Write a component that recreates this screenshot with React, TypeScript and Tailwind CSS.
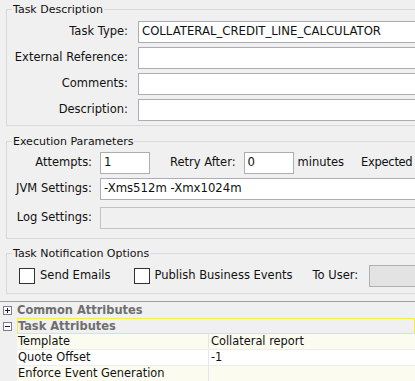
import React from "react";

const font = { fontFamily: '"DejaVu Sans", Verdana, sans-serif' };
const boldFont = { fontFamily: '"DejaVu Sans Condensed", "DejaVu Sans", sans-serif', fontStretch: "condensed" as const };

function Field({ value = "", disabled = false, className = "" }: { value?: string; disabled?: boolean; className?: string }) {
  return (
    <div
      className={`h-[22px] shrink-0 border flex items-center pl-[3px] text-[11.7px] text-[#111] whitespace-nowrap overflow-hidden ${
        disabled ? "bg-[#f0f0f0] border-[#c2c2c2]" : "bg-white border-[#abadb3]"
      } ${className}`}>
      {value}
    </div>
  );
}

function Group({ title, className = "", children }: { title: string; className?: string; children: React.ReactNode }) {
  return (
    <fieldset className={`ml-[6px] w-[500px] border border-[#d8d8d8] ${className}`}>
      <legend className="ml-[5px] px-px text-[11px] leading-[13px] text-[#111]">{title}</legend>
      {children}
    </fieldset>
  );
}

function Check({ label }: { label: string }) {
  return (
    <div className="flex items-center gap-[5px]">
      <div className="w-[16px] h-[16px] border border-[#333] bg-white" />
      <span>{label}</span>
    </div>
  );
}

const descRows = [
  { label: "Task Type:", value: "COLLATERAL_CREDIT_LINE_CALCULATOR" },
  { label: "External Reference:", value: "" },
  { label: "Comments:", value: "" },
  { label: "Description:", value: "" },
];

const attrRows = [
  { name: "Template", value: "Collateral report", bg: "bg-[#fbfbf0]" },
  { name: "Quote Offset", value: "-1", bg: "bg-white" },
  { name: "Enforce Event Generation", value: "", bg: "bg-[#fbfbf0]" },
];

function TreeBox({ open }: { open: boolean }) {
  return (
    <svg width="9" height="9" viewBox="0 0 9 9" className="shrink-0">
      <rect x="0.5" y="0.5" width="8" height="8" fill="#fff" stroke="#7d7d96" />
      <line x1="2" y1="4.5" x2="7" y2="4.5" stroke="#222" />
      {!open && <line x1="4.5" y1="2" x2="4.5" y2="7" stroke="#222" />}
    </svg>
  );
}

export default function App() {
  return (
    <div className="w-[415px] h-[381px] overflow-hidden bg-[#f0f0f0] text-[11.5px] text-[#111]" style={font}>
      <div className="pt-[3px]">
        <Group title="Task Description" className="pb-[4px]">
          <div className="flex flex-col gap-[4px] pt-[5px]">
            {descRows.map((r) => (
              <div key={r.label} className="flex items-center">
                <div className="w-[131px] text-right pr-[10px] whitespace-nowrap">{r.label}</div>
                <Field value={r.value} className="flex-1" />
              </div>
            ))}
          </div>
        </Group>

        <Group title="Execution Parameters" className="mt-[9px] pb-[9px]">
          <div className="flex flex-col pt-[4px]">
            <div className="flex items-center whitespace-nowrap">
              <div className="w-[93px] text-right pr-[8px]">Attempts:</div>
              <Field value="1" className="w-[50px]" />
              <span className="ml-[20px]">Retry After:</span>
              <Field value="0" className="w-[50px] ml-[8px]" />
              <span className="ml-[4px]">minutes</span>
              <span className="ml-[17px] tracking-[-0.3px]">Expected</span>
            </div>
            <div className="flex items-center mt-[4px]">
              <div className="w-[93px] text-right pr-[8px] whitespace-nowrap">JVM Settings:</div>
              <Field value="-Xms512m -Xmx1024m" className="flex-1" />
            </div>
            <div className="flex items-center mt-[7px]">
              <div className="w-[93px] text-right pr-[8px] whitespace-nowrap">Log Settings:</div>
              <Field disabled className="flex-1" />
            </div>
          </div>
        </Group>

        <Group title="Task Notification Options" className="mt-[8px] pb-[6px]">
          <div className="flex items-center pl-[12px] pt-[5px] whitespace-nowrap">
            <Check label="Send Emails" />
            <div className="ml-[23px]">
              <Check label="Publish Business Events" />
            </div>
            <span className="ml-[20px]">To User:</span>
            <div className="ml-[11px] w-[120px] h-[22px] shrink-0 border border-[#b0b0b0] bg-[#e3e3e3]" />
          </div>
        </Group>

        <div className="mt-[7px] border-t border-[#a0a0a0]" />

        <div className="flex items-center h-[16px] pl-[3px] gap-[5px]">
          <TreeBox open={false} />
          <span className="font-bold text-[12.7px] text-[#6e6e6e]" style={boldFont}>
            Common Attributes
          </span>
        </div>
        <div className="flex items-center h-[16px] pl-[3px] gap-[5px]">
          <TreeBox open />
          <div className="flex-1 h-[16px] border border-[#f0f04a] flex items-center">
            <span className="font-bold text-[12.7px] text-[#6e6e6e]" style={boldFont}>
              Task Attributes
            </span>
          </div>
        </div>

        <div className="ml-[17px] text-[11.4px]">
          {attrRows.map((r) => (
            <div key={r.name} className={`flex h-[16px] items-center border-b border-[#ececec] ${r.bg}`}>
              <div className="w-[192px] pl-[1px] h-full flex items-center border-r border-[#e6e6e6] whitespace-nowrap">{r.name}</div>
              <div className="pl-[2px]">{r.value}</div>
            </div>
          ))}
        </div>
      </div>
    </div>
  );
}
